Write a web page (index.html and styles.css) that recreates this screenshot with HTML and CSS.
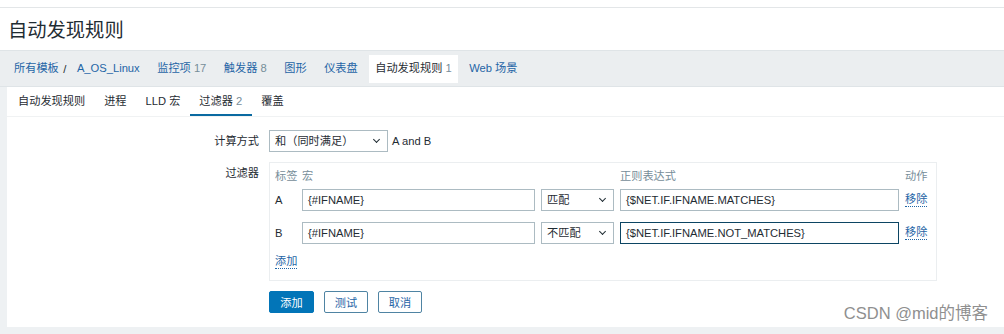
FILE: index.html
```html
<!DOCTYPE html>
<html lang="zh-CN">
<head>
    <meta charset="UTF-8">
    <title>自动发现规则</title>
    <link rel="stylesheet" href="styles.css">
</head>
<body>
    <div class="top-line"></div>
    <h1 class="page-title">自动发现规则</h1>

    <nav class="breadcrumbs">
        <a href="#">所有模板</a>
        <span class="sep">/</span>
        <a href="#" class="host">A_OS_Linux</a>
        <a href="#">监控项 <span class="count">17</span></a>
        <a href="#">触发器 <span class="count">8</span></a>
        <a href="#">图形</a>
        <a href="#">仪表盘</a>
        <a href="#" class="active">自动发现规则 <span class="count">1</span></a>
        <a href="#">Web 场景</a>
    </nav>

    <div class="content">
        <ul class="tabs">
            <li>自动发现规则</li>
            <li>进程</li>
            <li>LLD 宏</li>
            <li class="selected">过滤器 <span class="count">2</span></li>
            <li>覆盖</li>
        </ul>

        <form class="form-grid">
            <label class="form-label">计算方式</label>
            <div class="form-field inline">
                <div class="select calc">和（同时满足）<span class="caret"></span></div>
                <span class="expr">A and B</span>
            </div>

            <label class="form-label">过滤器</label>
            <div class="form-field">
                <div class="filter-box">
                    <div class="filter-head">
                        <span class="col-tag">标签</span>
                        <span class="col-macro">宏</span>
                        <span class="col-regex">正则表达式</span>
                        <span>动作</span>
                    </div>
                    <div class="filter-row">
                        <span class="tag">A</span>
                        <div class="input">{#IFNAME}</div>
                        <div class="select">匹配<span class="caret"></span></div>
                        <div class="input">{$NET.IF.IFNAME.MATCHES}</div>
                        <a href="#" class="link">移除</a>
                    </div>
                    <div class="filter-row">
                        <span class="tag">B</span>
                        <div class="input">{#IFNAME}</div>
                        <div class="select">不匹配<span class="caret"></span></div>
                        <div class="input focused">{$NET.IF.IFNAME.NOT_MATCHES}</div>
                        <a href="#" class="link">移除</a>
                    </div>
                    <a href="#" class="link add-link">添加</a>
                </div>

                <div class="buttons">
                    <button type="button" class="btn primary">添加</button>
                    <button type="button" class="btn">测试</button>
                    <button type="button" class="btn">取消</button>
                </div>
            </div>
        </form>

        <div class="watermark">CSDN @mid的博客</div>
    </div>

    <div class="bottom-band"></div>
</body>
</html>
```

FILE: styles.css
```css
body {
    margin: 0;
    background: #fff;
    font-family: "Liberation Sans", Arial, "Noto Sans CJK SC", sans-serif;
    font-size: 11.2px;
    color: #1f2c33;
    width: 1004px;
    height: 334px;
    overflow: hidden;
}

a {
    color: #1f65a6;
    text-decoration: none;
}

.top-line {
    height: 7px;
    border-bottom: 1px solid #e3e6e8;
}

.page-title {
    margin: 0;
    padding: 7px 0 0 8px;
    height: 35px;
    font-size: 19.3px;
    font-weight: normal;
    color: #1f2c33;
}

.breadcrumbs {
    display: flex;
    align-items: center;
    gap: 17.5px;
    height: 37px;
    background: #ebeef0;
    border-top: 1px solid #dfe4e7;
    border-bottom: 1px solid #dfe4e7;
    padding-left: 14px;
    box-sizing: border-box;
}

.breadcrumbs a {
    line-height: 17px;
    white-space: nowrap;
}

.breadcrumbs .sep {
    color: #1f2c33;
    margin: 0 -7px 0 -13px;
}

.breadcrumbs .count {
    color: #768d99;
}

.breadcrumbs a.active {
    display: inline-block;
    background: #fff;
    color: #1f2c33;
    padding: 5px 6px 6px;
    margin: 0 -6px;
}

.content {
    position: relative;
    height: 240px;
    border-left: 7px solid #eef1f3;
}

.tabs {
    display: flex;
    list-style: none;
    margin: 0;
    padding: 0 0 0 1.5px;
    height: 29px;
    border-bottom: 1px solid #f0f2f3;
}

.tabs li {
    padding: 6px 9.5px 0;
    line-height: 17px;
    color: #1f2c33;
}

.tabs li.selected {
    border-bottom: 2px solid #0a6aa1;
}

.tabs .count {
    color: #768d99;
}

.form-grid {
    display: grid;
    grid-template-columns: 252px 1fr;
    column-gap: 10px;
    row-gap: 10px;
    padding-top: 13px;
    margin: 0;
}

.form-label {
    text-align: right;
    line-height: 22px;
}

.form-field.inline {
    display: flex;
    align-items: center;
    gap: 4px;
}

.select,
.input {
    height: 22px;
    box-sizing: border-box;
    border: 1px solid #acbbc2;
    background: #fff;
    line-height: 20px;
    padding: 0 5px;
    white-space: nowrap;
    overflow: hidden;
}

.select {
    position: relative;
    padding-right: 18px;
}

.select.calc {
    width: 119px;
}

.caret {
    position: absolute;
    right: 8px;
    top: 6px;
    width: 4px;
    height: 4px;
    border-right: 1px solid #1f2c33;
    border-bottom: 1px solid #1f2c33;
    transform: rotate(45deg);
}

.input.focused {
    border-color: #0c4563;
}

.filter-box {
    width: 668px;
    box-sizing: border-box;
    border: 1px solid #ebeef0;
    padding: 5px 5px 11px;
}

.filter-head {
    display: flex;
    color: #768d99;
    line-height: 17px;
    margin-bottom: 4px;
}

.col-tag {
    width: 27px;
}

.col-macro {
    width: 318px;
}

.col-regex {
    width: 285px;
}

.filter-row {
    display: grid;
    grid-template-columns: 21px 233px 73px 279px auto;
    column-gap: 6px;
    align-items: center;
    margin-bottom: 11px;
}

.link {
    border-bottom: 1px dotted #1f65a6;
    justify-self: start;
    line-height: 13px;
    white-space: nowrap;
}

.add-link {
    display: inline-block;
}

.buttons {
    display: flex;
    gap: 10px;
    margin-top: 10px;
}

.btn {
    height: 22px;
    width: 44px;
    padding: 0;
    font-family: inherit;
    font-size: 11.2px;
    border: 1px solid #4f84a3;
    border-radius: 2px;
    background: #fff;
    color: #1f65a6;
    cursor: pointer;
}

.btn.primary {
    width: 45px;
    border-color: #0275b8;
    background: #0275b8;
    color: #fff;
}

.watermark {
    position: absolute;
    right: 16px;
    bottom: 3px;
    font-size: 16.5px;
    color: #8f8f8f;
}

.bottom-band {
    height: 10px;
    background: #eef1f3;
}
```
